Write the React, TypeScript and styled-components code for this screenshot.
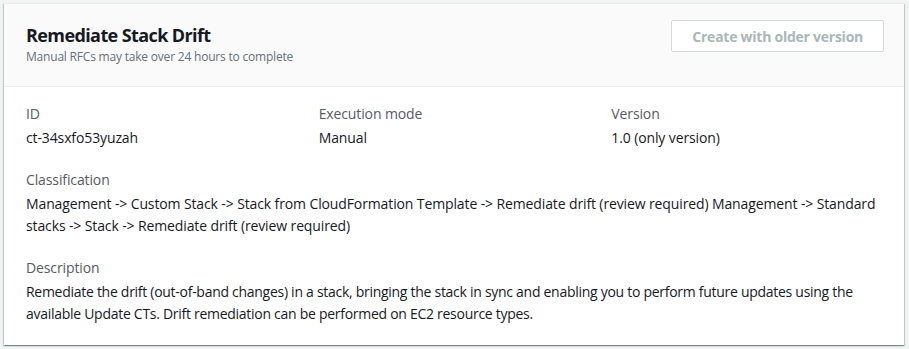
import styled, { createGlobalStyle } from "styled-components";

const GlobalStyle = createGlobalStyle`
  html, body {
    margin: 0;
    padding: 0;
    background: #f2f3f3;
    font-family: "Open Sans", "Noto Sans", Arial, sans-serif;
    color: #16191f;
  }
`;

const Page = styled.div`
  padding: 3px 5px 4px 4px;
`;

const Card = styled.section`
  background: #ffffff;
  border-top: 1px solid #eaeded;
  box-shadow: 0 1px 1px 0 rgba(0, 28, 36, 0.3),
    1px 1px 1px 0 rgba(0, 28, 36, 0.15), -1px 1px 1px 0 rgba(0, 28, 36, 0.15);
`;

const Header = styled.header`
  display: flex;
  justify-content: space-between;
  align-items: flex-start;
  background: #fafafa;
  border-bottom: 1px solid #eaeded;
  padding: 17px 20px 21px 22px;
`;

const TitleBlock = styled.div`
  display: flex;
  flex-direction: column;
`;

const Title = styled.h2`
  margin: 0;
  font-size: 18px;
  line-height: 28px;
  font-weight: 700;
  letter-spacing: -0.6px;
  color: #16191f;
`;

const Subtitle = styled.p`
  margin: 0;
  font-size: 12px;
  line-height: 16px;
  letter-spacing: -0.2px;
  color: #687078;
`;

const Button = styled.button`
  margin-top: -1px;
  height: 32px;
  padding: 0 20px;
  font-family: inherit;
  font-size: 14px;
  font-weight: 700;
  letter-spacing: -0.25px;
  color: #aab7b8;
  background: #ffffff;
  border: 1px solid #d5dbdb;
  border-radius: 2px;
  cursor: default;
`;

const Body = styled.div`
  display: flex;
  flex-direction: column;
  gap: 20px;
  padding: 16px 20px 20px 22px;
`;

const Columns = styled.div`
  display: grid;
  grid-template-columns: repeat(3, 1fr);
  column-gap: 20px;
`;

const Field = styled.div`
  display: flex;
  flex-direction: column;
`;

const Label = styled.div`
  font-size: 14px;
  line-height: 22px;
  letter-spacing: -0.12px;
  color: #545b64;
  margin-bottom: 2px;
`;

const Value = styled.div<{ $tracking?: number }>`
  font-size: 14px;
  line-height: 22px;
  letter-spacing: ${({ $tracking = -0.12 }) => `${$tracking}px`};
  color: #16191f;
`;

const fields = [
  { label: "ID", value: "ct-34sxfo53yuzah" },
  { label: "Execution mode", value: "Manual" },
  { label: "Version", value: "1.0 (only version)" },
];

export default function App() {
  return (
    <Page>
      <GlobalStyle />
      <Card>
        <Header>
          <TitleBlock>
            <Title>Remediate Stack Drift</Title>
            <Subtitle>Manual RFCs may take over 24 hours to complete</Subtitle>
          </TitleBlock>
          <Button disabled>Create with older version</Button>
        </Header>
        <Body>
          <Columns>
            {fields.map((f) => (
              <Field key={f.label}>
                <Label>{f.label}</Label>
                <Value>{f.value}</Value>
              </Field>
            ))}
          </Columns>
          <Field>
            <Label>Classification</Label>
            <Value>
              Management -&gt; Custom Stack -&gt; Stack from CloudFormation
              Template -&gt; Remediate drift (review required) Management -&gt;
              Standard stacks -&gt; Stack -&gt; Remediate drift (review
              required)
            </Value>
          </Field>
          <Field>
            <Label>Description</Label>
            <Value $tracking={-0.28}>
              Remediate the drift (out-of-band changes) in a stack, bringing the
              stack in sync and enabling you to perform future updates using
              the available Update CTs. Drift remediation can be performed on
              EC2 resource types.
            </Value>
          </Field>
        </Body>
      </Card>
    </Page>
  );
}
